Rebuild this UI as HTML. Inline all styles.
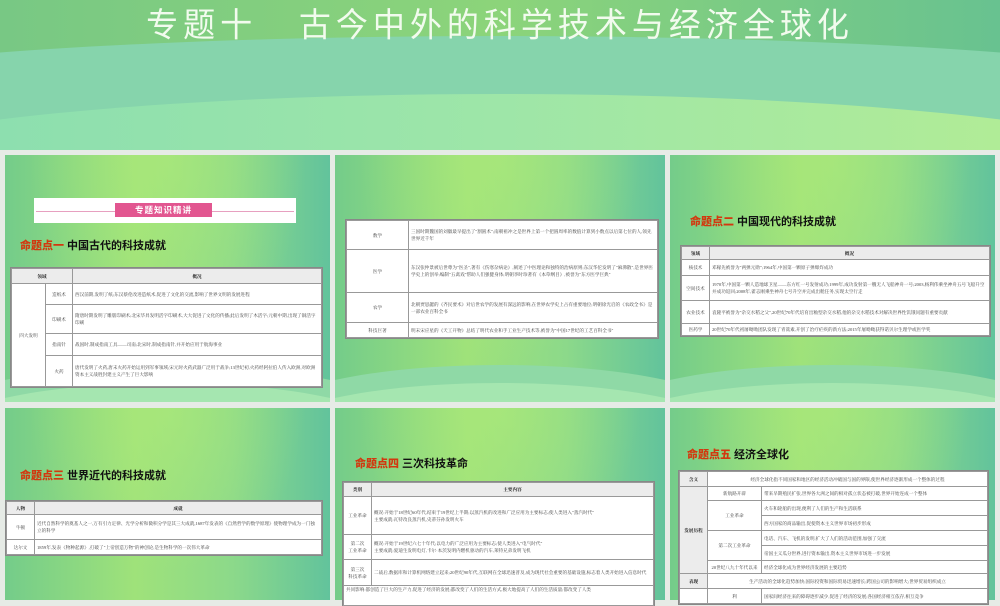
<!DOCTYPE html>
<html><head><meta charset="utf-8"><style>
*{margin:0;padding:0;box-sizing:border-box}
body{width:1000px;height:600px;overflow:hidden;background:#e6ebe6;position:relative;font-family:"Liberation Serif","Noto Serif CJK SC",serif}
.top{position:absolute;left:0;top:0;width:1000px;height:150px;overflow:hidden;background:linear-gradient(90deg,#78c884,#8cd47a 50%,#68c290)}
.title{position:absolute;left:0;top:7px;width:1000px;text-align:center;color:#f2fbee;font-family:"Liberation Sans","Noto Sans CJK SC",sans-serif;font-size:32px;line-height:36px;letter-spacing:5px;transform:scaleY(1.05)}
.slide{position:absolute;width:325px;overflow:hidden;background:linear-gradient(90deg,#74cc8a,#9fe27a 40%,#8cd98a 70%,#62c39c)}
.slide .glow{position:absolute;left:0;top:0;width:100%;height:100%;background:radial-gradient(ellipse at 50% 0%,rgba(175,235,120,.6),rgba(175,235,120,0) 60%)}
.wave{position:absolute;left:-20%;width:140%;border-radius:50%}
.h{position:absolute;font-family:"Liberation Sans","Noto Sans CJK SC",sans-serif;font-weight:bold;font-size:11px;color:#111;white-space:nowrap}
.h b{color:#d2380f}
table{position:absolute;border-collapse:collapse;background:#fff;font-size:4.6px;color:#444;box-shadow:0 0 0 1px #888}
td{border:0.6px solid #999;padding:0 2px;line-height:7px;vertical-align:middle}
td.c{text-align:center}
tr.hd td{background:#ececec;color:#222;text-align:center;font-weight:bold}
</style></head><body>
<div class="top">
 <div class="wave" style="top:36px;height:150px;background:#86d4ac;left:-30%;width:160%"></div>
 <div class="wave" style="top:94px;height:170px;background:linear-gradient(90deg,#86dcb2,#9ee6a8 50%,#b8ee90)"></div>
 <div class="title">专题十&nbsp;&nbsp;&nbsp;古今中外的科学技术与经济全球化</div>
</div>

<!-- slide 1 -->
<div class="slide" style="left:5px;top:155px;height:247px"><div class="glow"></div>
 <div class="wave" style="top:210px;height:100px;background:#8fd9a6"></div>
 <div class="wave" style="top:228px;height:100px;background:#a5e6b0"></div>
</div>
<div style="position:absolute;left:34px;top:198px;width:262px;height:25px;background:#fff"></div>
<div style="position:absolute;left:36px;top:211px;width:258px;height:1px;background:#e7a0c0"></div>
<div style="position:absolute;left:115px;top:203px;width:97px;height:14px;background:#e25690;color:#fff;font-family:'Liberation Sans','Noto Sans CJK SC',sans-serif;font-weight:bold;font-size:8.5px;text-align:center;line-height:14px;letter-spacing:1px">专题知识精讲</div>
<div class="h" style="left:20px;top:237px"><b>命题点一</b> 中国古代的科技成就</div>
<table style="left:11px;top:268px;width:311px">
<tr class="hd" style="height:15px"><td colspan="2" style="width:61px">领域</td><td>概况</td></tr>
<tr style="height:21px"><td class="c" rowspan="4" style="width:34px">四大发明</td><td class="c" style="width:27px">造纸术</td><td>西汉前期,发明了纸;东汉蔡伦改进造纸术,促进了文化的交流,影响了世界文明的发展进程</td></tr>
<tr style="height:29px"><td class="c">印刷术</td><td>隋唐时期发明了雕版印刷术;北宋毕昇发明活字印刷术,大大促进了文化的传播;此后发明了木活字;元朝中期,出现了铜活字印刷</td></tr>
<tr style="height:22px"><td class="c">指南针</td><td>战国时,制成指南工具——司南;北宋时,制成指南针,并开始应用于航海事业</td></tr>
<tr style="height:31px"><td class="c">火药</td><td>唐代发明了火药,唐末火药开始运用到军事领域;宋元时火药武器广泛用于战争;13世纪初,火药经阿拉伯人传入欧洲,对欧洲资本主义战胜封建主义产生了巨大影响</td></tr>
</table>

<!-- slide 2 -->
<div class="slide" style="left:335px;top:155px;height:247px;width:330px"><div class="glow"></div>
 <div class="wave" style="top:210px;height:100px;background:#8fd9a6"></div>
 <div class="wave" style="top:228px;height:100px;background:#a5e6b0"></div>
</div>
<table style="left:346px;top:220px;width:312px">
<tr style="height:29px"><td class="c" style="width:62px">数学</td><td>三国时期魏国的刘徽最早提出了"割圆术";南朝祖冲之是世界上第一个把圆周率的数值计算到小数点以后第七位的人,领先世界近千年</td></tr>
<tr style="height:43px"><td class="c">医学</td><td>东汉张仲景被后世尊为"医圣",著有《伤寒杂病论》,阐述了中医理论和独特的治病原则;东汉华佗发明了"麻沸散",是世界医学史上的创举;编制"五禽戏"帮助人们强健身体;明朝李时珍著有《本草纲目》,被誉为"东方医学巨典"</td></tr>
<tr style="height:30px"><td class="c">农学</td><td>北朝贾思勰的《齐民要术》对后世农学的发展有深远的影响,在世界农学史上占有重要地位;明朝徐光启的《农政全书》是一部农业百科全书</td></tr>
<tr style="height:15px"><td class="c">科技巨著</td><td>明末宋应星的《天工开物》总结了明代农业和手工业生产技术等,被誉为"中国17世纪的工艺百科全书"</td></tr>
</table>

<!-- slide 3 -->
<div class="slide" style="left:670px;top:155px;height:247px"><div class="glow"></div>
 <div class="wave" style="top:210px;height:100px;background:#8fd9a6"></div>
 <div class="wave" style="top:228px;height:100px;background:#a5e6b0"></div>
</div>
<div class="h" style="left:690px;top:213px"><b>命题点二</b> 中国现代的科技成就</div>
<table style="left:681px;top:246px;width:309px">
<tr class="hd" style="height:13px"><td style="width:28px">领域</td><td>概况</td></tr>
<tr style="height:16px"><td class="c">核技术</td><td>邓稼先被誉为"两弹元勋";1964年,中国第一颗原子弹爆炸成功</td></tr>
<tr style="height:25px"><td class="c">空间技术</td><td>1970年,中国第一颗人造地球卫星——东方红一号发射成功;1999年,成功发射第一艘无人飞船神舟一号;2003,杨利伟乘坐神舟五号飞船升空并成功返回;2008年,翟志刚乘坐神舟七号升空并完成出舱任务,实现太空行走</td></tr>
<tr style="height:23px"><td class="c">农业技术</td><td>袁隆平被誉为"杂交水稻之父",20世纪70年代培育出籼型杂交水稻,他的杂交水稻技术对解决世界性饥饿问题有重要贡献</td></tr>
<tr style="height:12px"><td class="c">医药学</td><td>20世纪70年代初屠呦呦团队发现了青蒿素,开创了治疗疟疾的新方法;2015年屠呦呦获得诺贝尔生理学或医学奖</td></tr>
</table>

<!-- slide 4 -->
<div class="slide" style="left:5px;top:408px;height:192px"><div class="glow"></div></div>
<div class="h" style="left:20px;top:467px"><b>命题点三</b> 世界近代的科技成就</div>
<table style="left:6px;top:501px;width:316px">
<tr class="hd" style="height:13px"><td style="width:28px">人物</td><td>成就</td></tr>
<tr style="height:25px"><td class="c">牛顿</td><td>近代自然科学的奠基人之一,万有引力定律、光学分析和微积分学是其三大成就,1687年发表的《自然哲学的数学原理》使物理学成为一门独立的科学</td></tr>
<tr style="height:15px"><td class="c">达尔文</td><td>1859年,发表《物种起源》,打破了"上帝创造万物"的神创论,是生物科学的一次伟大革命</td></tr>
</table>

<!-- slide 5 -->
<div class="slide" style="left:335px;top:408px;height:192px;width:330px"><div class="glow"></div></div>
<div class="h" style="left:355px;top:455px"><b>命题点四</b> 三次科技革命</div>
<table style="left:343px;top:482px;width:311px">
<tr class="hd" style="height:14px"><td style="width:28px">类别</td><td>主要内容</td></tr>
<tr style="height:38px"><td class="c">工业革命</td><td>概况:开始于18世纪60年代,结束于19世纪上半期;以蒸汽机的改进和广泛应用为主要标志;使人类进入"蒸汽时代"<br>主要成就:瓦特改良蒸汽机,史蒂芬孙发明火车</td></tr>
<tr style="height:25px"><td class="c">第二次<br>工业革命</td><td>概况:开始于19世纪六七十年代;以电力的广泛应用为主要标志;使人类进入"电气时代"<br>主要成就:爱迪生发明电灯,卡尔·本茨发明内燃机驱动的汽车,莱特兄弟发明飞机</td></tr>
<tr style="height:26px"><td class="c">第三次<br>科技革命</td><td>二战后,数据库和计算机网络建立起来;20世纪90年代,互联网在全球迅速普及,成为现代社会重要的基础设施,标志着人类开始进入信息时代</td></tr>
<tr style="height:20px"><td colspan="2" style="vertical-align:top">共同影响:都创造了巨大的生产力,促进了经济的发展;都改变了人们的生活方式,极大地提高了人们的生活质量;都改变了人类</td></tr>
</table>

<!-- slide 6 -->
<div class="slide" style="left:670px;top:408px;height:192px"><div class="glow"></div></div>
<div class="h" style="left:687px;top:446px"><b>命题点五</b> 经济全球化</div>
<table style="left:679px;top:471px;width:309px">
<tr style="height:15px"><td class="c" style="width:28px;font-weight:bold;color:#222;background:#ececec">含义</td><td colspan="2" class="c">经济全球化指不同国家和地区的经济活动冲破国与国的界限,使世界经济逐渐形成一个整体的过程</td></tr>
<tr style="height:14px"><td class="c" rowspan="6" style="font-weight:bold;color:#222;background:#ececec">发展历程</td><td class="c" style="width:54px">新航路开辟</td><td>带来早期殖民扩张,世界各大洲之间的相对孤立状态被打破,世界开始连成一个整体</td></tr>
<tr style="height:15px"><td class="c" rowspan="2">工业革命</td><td>火车和轮船的出现,便利了人们的生产和生活联系</td></tr>
<tr style="height:15px"><td>西方国家的商品输出,促使资本主义世界市场初步形成</td></tr>
<tr style="height:15px"><td class="c" rowspan="2">第二次工业革命</td><td>电话、汽车、飞机的发明,扩大了人们的活动范围,加强了交流</td></tr>
<tr style="height:15px"><td>帝国主义瓜分世界,进行资本输出,资本主义世界市场进一步发展</td></tr>
<tr style="height:13px"><td class="c" style="padding:0">20世纪八九十年代以来</td><td>经济全球化成为世界经济发展的主要趋势</td></tr>
<tr style="height:15px"><td class="c" style="font-weight:bold;color:#222;background:#ececec">表现</td><td colspan="2" class="c">生产活动的全球化趋势加快;国际投资和国际贸易迅速增长;跨国公司的影响增大;世界贸易组织成立</td></tr>
<tr style="height:15px"><td></td><td class="c">利</td><td>国家间经济往来的障碍逐步减少,促进了经济的发展;各国经济相互依存,相互竞争</td></tr>
</table>
</body></html>
